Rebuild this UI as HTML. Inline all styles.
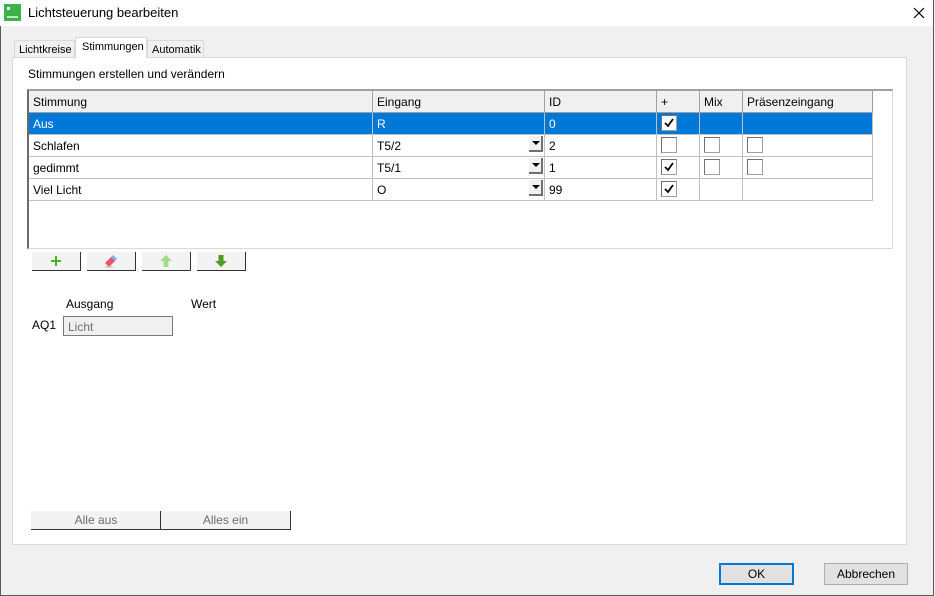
<!DOCTYPE html>
<html><head><meta charset="utf-8"><style>
*{box-sizing:border-box;margin:0;padding:0}
body{width:935px;height:596px;background:#f0f0f0;font-family:"Liberation Sans",sans-serif;font-size:12px;color:#000;position:relative;overflow:hidden}
.a{position:absolute}
.win{left:0;top:0;width:934px;height:596px;border:1px solid #5a5a5a;border-top:none}
.title{left:0;top:0;width:933px;height:26px;background:#fff}
.cell{position:absolute;border-right:1px solid #c0c0c0;border-bottom:1px solid #c0c0c0;padding-left:4px;padding-top:1px;line-height:21px;white-space:nowrap;overflow:hidden}
.hd{background:#f0f0f0;border-right:1px solid #a0a0a0;border-bottom:1px solid #a0a0a0}
.sel{background:#0078d7;color:#fff}
.cb{position:absolute;width:16px;height:16px;background:#fff;border:1px solid #a0a0a0;border-top-color:#707070;border-left-color:#707070}
.cb svg{position:absolute;left:1px;top:1px}
.dd{position:absolute;width:14px;height:16px;background:#f0f0f0;border-right:2px solid #707070;border-bottom:2px solid #707070}
.dd:after{content:"";position:absolute;left:3px;top:5px;border-left:4px solid transparent;border-right:4px solid transparent;border-top:4px solid #000}
.btn{position:absolute;background:#f3f3f3;border-right:1px solid #333;border-bottom:1px solid #333;height:19px}
</style></head><body>
<div class="a win"></div>
<div class="a title"></div>
<svg class="a" style="left:4px;top:4px" width="17" height="17"><rect x="0" y="0" width="17" height="17" fill="#3cb34a"/><rect x="3" y="3" width="3" height="3" fill="#fff"/><rect x="3" y="12" width="11" height="2" fill="#bfe8c4"/></svg>
<div class="a" style="left:28px;top:5px;font-size:13px">Lichtsteuerung bearbeiten</div>
<svg class="a" style="left:913px;top:7px" width="12" height="12"><path d="M1 1L11 11M11 1L1 11" stroke="#000" stroke-width="1.2"/></svg>

<div class="a" style="left:14px;top:40px;width:61px;height:18px;border:1px solid #d9d9d9;border-bottom:none;background:#f0f0f0;font-size:11px;padding:3px 0 0 4px">Lichtkreise</div>
<div class="a" style="left:75px;top:37px;width:72px;height:21px;border:1px solid #d9d9d9;border-bottom:none;background:#fff;font-size:11px;padding:3px 0 0 6px;z-index:2">Stimmungen</div>
<div class="a" style="left:147px;top:40px;width:57px;height:18px;border:1px solid #d9d9d9;border-bottom:none;background:#f0f0f0;font-size:11px;padding:3px 0 0 4px">Automatik</div>
<div class="a" style="left:12px;top:57px;width:895px;height:488px;background:#fff;border:1px solid #d9d9d9"></div>
<div class="a" style="left:28px;top:67px">Stimmungen erstellen und verändern</div>

<div class="a" style="left:27px;top:89px;width:866px;height:160px;background:#fff;border-top:2px solid #a0a0a0;border-left:2px solid #6a6a6a;border-right:1px solid #d9d9d9;border-bottom:1px solid #d9d9d9"></div>
<div class="a" style="left:29px;top:91px;width:844px;height:110px">
 <div class="cell hd" style="left:0;top:0;width:344px;height:22px">Stimmung</div>
 <div class="cell hd" style="left:344px;top:0;width:172px;height:22px">Eingang</div>
 <div class="cell hd" style="left:516px;top:0;width:112px;height:22px">ID</div>
 <div class="cell hd" style="left:628px;top:0;width:43px;height:22px">+</div>
 <div class="cell hd" style="left:671px;top:0;width:43px;height:22px">Mix</div>
 <div class="cell hd" style="left:714px;top:0;width:130px;height:22px">Präsenzeingang</div>

 <div class="cell sel" style="left:0;top:22px;width:344px;height:22px">Aus</div>
 <div class="cell sel" style="left:344px;top:22px;width:172px;height:22px">R</div>
 <div class="cell sel" style="left:516px;top:22px;width:112px;height:22px">0</div>
 <div class="cell sel" style="left:628px;top:22px;width:43px;height:22px"></div>
 <div class="cell sel" style="left:671px;top:22px;width:43px;height:22px"></div>
 <div class="cell sel" style="left:714px;top:22px;width:130px;height:22px"></div>

 <div class="cell" style="left:0;top:44px;width:344px;height:22px">Schlafen</div>
 <div class="cell" style="left:344px;top:44px;width:172px;height:22px">T5/2</div>
 <div class="cell" style="left:516px;top:44px;width:112px;height:22px">2</div>
 <div class="cell" style="left:628px;top:44px;width:43px;height:22px"></div>
 <div class="cell" style="left:671px;top:44px;width:43px;height:22px"></div>
 <div class="cell" style="left:714px;top:44px;width:130px;height:22px"></div>

 <div class="cell" style="left:0;top:66px;width:344px;height:22px">gedimmt</div>
 <div class="cell" style="left:344px;top:66px;width:172px;height:22px">T5/1</div>
 <div class="cell" style="left:516px;top:66px;width:112px;height:22px">1</div>
 <div class="cell" style="left:628px;top:66px;width:43px;height:22px"></div>
 <div class="cell" style="left:671px;top:66px;width:43px;height:22px"></div>
 <div class="cell" style="left:714px;top:66px;width:130px;height:22px"></div>

 <div class="cell" style="left:0;top:88px;width:344px;height:22px">Viel Licht</div>
 <div class="cell" style="left:344px;top:88px;width:172px;height:22px">O</div>
 <div class="cell" style="left:516px;top:88px;width:112px;height:22px">99</div>
 <div class="cell" style="left:628px;top:88px;width:43px;height:22px"></div>
 <div class="cell" style="left:671px;top:88px;width:43px;height:22px"></div>
 <div class="cell" style="left:714px;top:88px;width:130px;height:22px"></div>
</div>
<div class="dd" style="left:529px;top:136px"></div>
<div class="dd" style="left:529px;top:158px"></div>
<div class="dd" style="left:529px;top:180px"></div>
<div class="cb" style="left:661px;top:115px"><svg width="12" height="12"><path d="M2 6L5 9L10 2" stroke="#000" stroke-width="1.8" fill="none"/></svg></div>
<div class="cb" style="left:661px;top:137px"></div>
<div class="cb" style="left:704px;top:137px"></div>
<div class="cb" style="left:747px;top:137px"></div>
<div class="cb" style="left:661px;top:159px"><svg width="12" height="12"><path d="M2 6L5 9L10 2" stroke="#000" stroke-width="1.8" fill="none"/></svg></div>
<div class="cb" style="left:704px;top:159px"></div>
<div class="cb" style="left:747px;top:159px"></div>
<div class="cb" style="left:661px;top:181px"><svg width="12" height="12"><path d="M2 6L5 9L10 2" stroke="#000" stroke-width="1.8" fill="none"/></svg></div>

<div class="btn" style="left:32px;top:252px;width:49px"><svg class="a" style="left:18px;top:3px" width="12" height="12"><path d="M6 1V11M1 6H11" stroke="#4caf2a" stroke-width="2"/></svg></div>
<div class="btn" style="left:87px;top:252px;width:49px"><svg class="a" style="left:16px;top:2px" width="16" height="14"><path d="M2 9L8 3L12 7L6 13Z" fill="#e5566b"/><path d="M8 3L10 1L14 5L12 7Z" fill="#7fb0e0"/><path d="M2 13H10" stroke="#bbb"/></svg></div>
<div class="btn" style="left:142px;top:252px;width:49px"><svg class="a" style="left:17px;top:2px" width="14" height="14"><path d="M7 1L13 7H9.5V13H4.5V7H1Z" fill="#a6d98a"/></svg></div>
<div class="btn" style="left:197px;top:252px;width:49px"><svg class="a" style="left:17px;top:2px" width="14" height="14"><path d="M7 13L13 7H9.5V1H4.5V7H1Z" fill="#4c9f1e"/></svg></div>

<div class="a" style="left:66px;top:297px">Ausgang</div>
<div class="a" style="left:191px;top:297px">Wert</div>
<div class="a" style="left:32px;top:318px">AQ1</div>
<div class="a" style="left:63px;top:316px;width:110px;height:20px;background:#f0f0f0;border:1px solid #7a7a7a;color:#6d6d6d;padding:3px 0 0 4px">Licht</div>

<div class="btn" style="left:31px;top:511px;width:130px;color:#6d6d6d;text-align:center;line-height:19px;border-right:none;border-bottom:1px solid #333">Alle aus</div>
<div class="btn" style="left:160px;top:511px;width:131px;color:#6d6d6d;text-align:center;line-height:19px;border-left:1px solid #333">Alles ein</div>

<div class="a" style="left:719px;top:563px;width:75px;height:22px;background:#e1e1e1;border:2px solid #0078d7;text-align:center;line-height:18px">OK</div>
<div class="a" style="left:824px;top:563px;width:84px;height:22px;background:#e1e1e1;border:1px solid #adadad;text-align:center;line-height:20px">Abbrechen</div>
</body></html>
